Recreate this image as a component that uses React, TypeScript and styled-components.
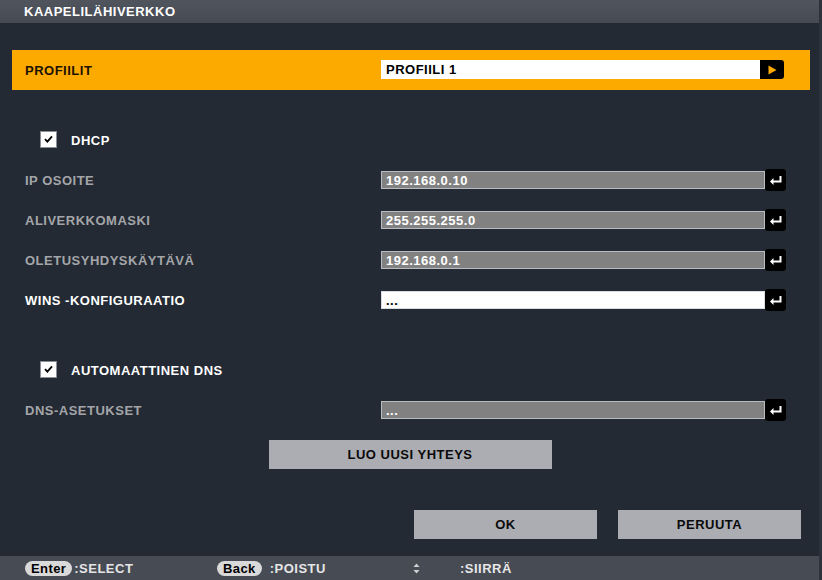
import React from "react";
import styled, { createGlobalStyle } from "styled-components";

const Global = createGlobalStyle`
  html, body { margin: 0; padding: 0; background: #232a33; }
  body { font-family: "Liberation Sans", Arial, sans-serif; }
`;

const Screen = styled.div`
  width: 822px;
  height: 580px;
  background: #232a33;
  display: flex;
  flex-direction: column;
  overflow: hidden;
  font-family: "Liberation Sans", Arial, sans-serif;
  font-weight: bold;
  font-size: 13px;
  letter-spacing: 0.5px;
  border-right: 3px solid #2c333c;
  box-sizing: border-box;
`;

const TitleBar = styled.div`
  height: 23px;
  flex: none;
  background: linear-gradient(#50545d, #464a53);
  color: #ffffff;
  display: flex;
  align-items: center;
  padding-left: 24px;
  padding-bottom: 1px;
  box-sizing: border-box;
`;

const Body = styled.div`
  flex: 1;
  display: flex;
  flex-direction: column;
  padding: 27px 9px 0 12px;
`;

const ProfileBar = styled.div`
  height: 40px;
  background: #fcaa00;
  display: flex;
  align-items: center;
  padding-left: 13px;
  color: #1c1200;
`;

const LabelCell = styled.div<{ $tone?: "dim" | "bright" }>`
  width: 356px;
  flex: none;
  color: ${(p) => (p.$tone === "dim" ? "#a3a5a9" : p.$tone === "bright" ? "#ffffff" : "inherit")};
`;

const Section = styled.div<{ $top: number }>`
  margin-top: ${(p) => p.$top}px;
  display: flex;
  flex-direction: column;
`;

const Row = styled.div`
  height: 40px;
  display: flex;
  align-items: center;
  padding-left: 13px;
`;

const CheckRow = styled(Row)`
  padding-left: 28px;
  color: #ffffff;
`;

const CheckBox = styled.div`
  width: 15px;
  height: 15px;
  background: #ffffff;
  border: 1px solid #8a8f96;
  display: flex;
  align-items: center;
  justify-content: center;
  margin-right: 14px;
  margin-top: -2px;
`;

const SelectBox = styled.div`
  display: flex;
  height: 19px;
  width: 403px;
  margin-top: -1px;
`;

const SelectValue = styled.div`
  flex: 1;
  background: #ffffff;
  color: #000000;
  display: flex;
  align-items: center;
  padding-left: 5px;
`;

const SelectArrow = styled.div`
  width: 24px;
  background: #000000;
  border-radius: 0 3px 3px 0;
  display: flex;
  align-items: center;
  justify-content: center;
`;

const FieldWrap = styled.div`
  display: flex;
  align-items: center;
`;

const Field = styled.div<{ $active?: boolean }>`
  width: 384px;
  height: 18px;
  box-sizing: border-box;
  background: ${(p) => (p.$active ? "#ffffff" : "#818181")};
  color: ${(p) => (p.$active ? "#000000" : "#ffffff")};
  border: 1px solid ${(p) => (p.$active ? "#d9dde2" : "#b9bcc0")};
  display: flex;
  align-items: center;
  padding-left: 4px;
`;

const EnterKey = styled.div`
  width: 21px;
  height: 22px;
  background: #000000;
  border-radius: 3px;
  display: flex;
  align-items: center;
  justify-content: center;
`;

const CenterRow = styled.div<{ $top: number }>`
  margin-top: ${(p) => p.$top}px;
  display: flex;
  justify-content: center;
  padding-right: 2px;
`;

const Button = styled.div<{ $w: number }>`
  width: ${(p) => p.$w}px;
  height: 29px;
  background: #abadb3;
  color: #0a0a0a;
  display: flex;
  align-items: center;
  justify-content: center;
`;

const ButtonRow = styled.div`
  margin-top: 41px;
  display: flex;
  justify-content: flex-end;
  gap: 21px;
  padding-right: 9px;
`;

const Footer = styled.div`
  flex: none;
  height: 24px;
  background: #474b54;
  display: flex;
  align-items: center;
  color: #e6e6e6;
  margin-top: 17px;
`;

const Hint = styled.div<{ $w: number; $pl?: number }>`
  width: ${(p) => p.$w}px;
  padding-left: ${(p) => p.$pl ?? 0}px;
  display: flex;
  align-items: center;
  flex: none;
  box-sizing: border-box;
`;

const Pill = styled.span`
  background: #d9d9d9;
  color: #000000;
  border-radius: 8px;
  padding: 0 6px;
  height: 15px;
  line-height: 15px;
  font-size: 13px;
  letter-spacing: 0.4px;
  margin-right: 2px;
`;

const HintText = styled.span<{ $ml?: number }>`
  margin-left: ${(p) => p.$ml ?? 0}px;
`;

const Check = () => (
  <svg width="11" height="10" viewBox="0 0 11 10">
    <path d="M2 5.2 L4.4 7.6 L9 2.4" stroke="#000" strokeWidth="1.8" fill="none" />
  </svg>
);

const ReturnIcon = () => (
  <svg width="14" height="10" viewBox="0 0 14 10">
    <path d="M11.5 1 V6.5 H3" stroke="#fff" strokeWidth="2" fill="none" />
    <path d="M1 6.5 L4.5 3 V10 Z" fill="#fff" />
  </svg>
);

const fields = [
  { label: "IP OSOITE", value: "192.168.0.10", active: false },
  { label: "ALIVERKKOMASKI", value: "255.255.255.0", active: false },
  { label: "OLETUSYHDYSKÄYTÄVÄ", value: "192.168.0.1", active: false },
  { label: "WINS -KONFIGURAATIO", value: "...", active: true },
];

const InputRow = ({ label, value, active }: { label: string; value: string; active: boolean }) => (
  <Row>
    <LabelCell $tone={active ? "bright" : "dim"}>{label}</LabelCell>
    <FieldWrap>
      <Field $active={active}>{value}</Field>
      <EnterKey>
        <ReturnIcon />
      </EnterKey>
    </FieldWrap>
  </Row>
);

export default function App() {
  return (
    <>
      <Global />
      <Screen>
        <TitleBar>KAAPELILÄHIVERKKO</TitleBar>
        <Body>
          <ProfileBar>
            <LabelCell>PROFIILIT</LabelCell>
            <SelectBox>
              <SelectValue>PROFIILI 1</SelectValue>
              <SelectArrow>
                <svg width="9" height="10" viewBox="0 0 9 10">
                  <path d="M0.5 0.5 L8.5 5 L0.5 9.5 Z" fill="#fcaa00" />
                </svg>
              </SelectArrow>
            </SelectBox>
          </ProfileBar>

          <Section $top={30}>
            <CheckRow>
              <CheckBox>
                <Check />
              </CheckBox>
              DHCP
            </CheckRow>
            {fields.map((f) => (
              <InputRow key={f.label} {...f} />
            ))}
          </Section>

          <Section $top={30}>
            <CheckRow>
              <CheckBox>
                <Check />
              </CheckBox>
              AUTOMAATTINEN DNS
            </CheckRow>
            <InputRow label="DNS-ASETUKSET" value="..." active={false} />
          </Section>

          <CenterRow $top={10}>
            <Button $w={283}>LUO UUSI YHTEYS</Button>
          </CenterRow>

          <ButtonRow>
            <Button $w={183}>OK</Button>
            <Button $w={183}>PERUUTA</Button>
          </ButtonRow>
        </Body>
        <Footer>
          <Hint $w={217} $pl={25}>
            <Pill>Enter</Pill>
            <HintText>:SELECT</HintText>
          </Hint>
          <Hint $w={193}>
            <Pill>Back</Pill>
            <HintText $ml={6}>:POISTU</HintText>
          </Hint>
          <Hint $w={50} $pl={3}>
            <svg width="7" height="11" viewBox="0 0 7 11">
              <path d="M3.5 0.5 L6.5 4 H0.5 Z M3.5 10.5 L6.5 7 H0.5 Z" fill="#d0d0d0" />
            </svg>
          </Hint>
          <Hint $w={100}>
            <HintText>:SIIRRÄ</HintText>
          </Hint>
        </Footer>
      </Screen>
    </>
  );
}
